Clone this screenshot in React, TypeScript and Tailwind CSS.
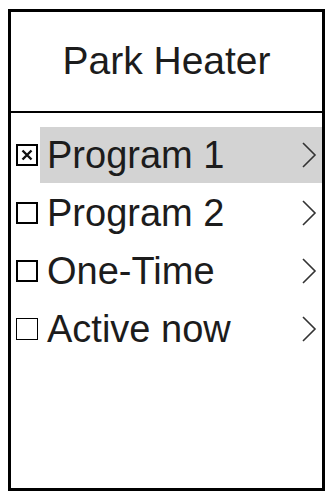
const items = [
  { label: "Program 1", checked: true, active: true, thin: false },
  { label: "Program 2", checked: false, active: false, thin: false },
  { label: "One-Time", checked: false, active: false, thin: false },
  { label: "Active now", checked: false, active: false, thin: true },
];

function Checkbox({ checked, thin }: { checked: boolean; thin: boolean }) {
  return (
    <div
      className={`flex h-[22px] w-[22px] shrink-0 items-center justify-center border-black ${
        thin ? "border" : "border-2"
      }`}
    >
      {checked && (
        <svg width="12" height="12" viewBox="0 0 12 12">
          <path d="M1.5 1.5 L10.5 10.5 M10.5 1.5 L1.5 10.5" stroke="#111" strokeWidth="2.4" />
        </svg>
      )}
    </div>
  );
}

function Chevron() {
  return (
    <svg width="16" height="28" viewBox="0 0 16 28" className="shrink-0">
      <polyline points="2,2 14,14 2,26" fill="none" stroke="#333" strokeWidth="1.6" />
    </svg>
  );
}

export default function App() {
  return (
    <div className="h-[493px] w-[329px] bg-white pl-[8px] pt-[9px] font-['Liberation_Sans',Arial,sans-serif] text-[#1c1c1c]">
      <div className="flex h-[482px] w-[317px] flex-col border-[3px] border-black">
        <div className="flex h-[101px] items-center justify-center border-b-2 border-black pb-[2px]">
          <h1 className="text-[39px] leading-none">Park Heater</h1>
        </div>
        <ul className="flex flex-col gap-[2px] pt-[14px]">
          {items.map((it) => (
            <li key={it.label} className="flex h-[56px] items-center">
              <div className="flex w-[29px] justify-end pr-[2px]">
                <Checkbox checked={it.checked} thin={it.thin} />
              </div>
              <div
                className={`flex h-full flex-1 items-center justify-between pl-[7px] pr-[5px] ${
                  it.active ? "bg-[#d3d3d3]" : ""
                }`}
              >
                <span className="text-[38px] leading-none">{it.label}</span>
                <Chevron />
              </div>
            </li>
          ))}
        </ul>
      </div>
    </div>
  );
}
